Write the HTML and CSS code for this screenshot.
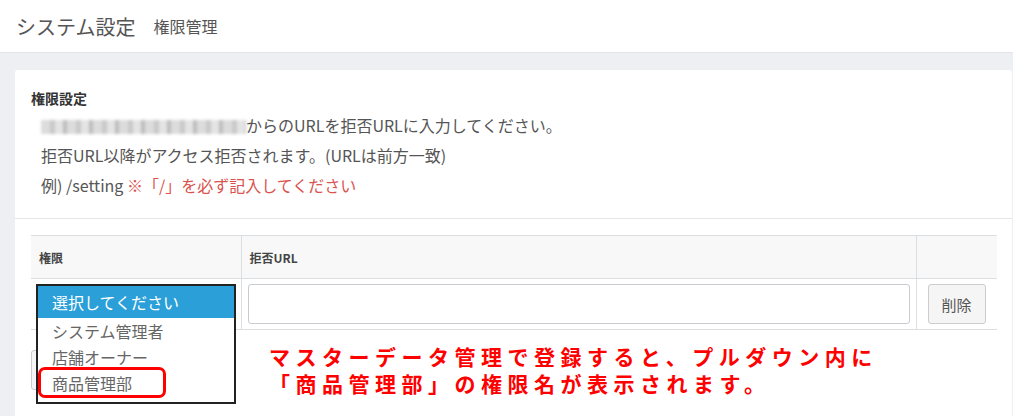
FILE: index.html
```html
<!DOCTYPE html>
<html lang="ja">
<head>
    <meta charset="UTF-8">
    <title>権限管理</title>
    <link rel="stylesheet" href="styles.css">
</head>
<body>
    <header class="page-header">
        <h1 class="page-title">システム設定</h1>
        <span class="page-sub">権限管理</span>
    </header>

    <main class="content">
        <section class="card">
            <div class="card-head">
                <h2 class="card-title">権限設定</h2>
                <p class="note"><span class="mosaic" aria-hidden="true"></span>からのURLを拒否URLに入力してください。</p>
                <p class="note">拒否URL以降がアクセス拒否されます。(URLは前方一致)</p>
                <p class="note">例) /setting <span class="warn">※「/」を必ず記入してください</span></p>
            </div>

            <div class="card-body">
                <table class="perm-table">
                    <thead>
                        <tr>
                            <th class="col-role">権限</th>
                            <th class="col-url">拒否URL</th>
                            <th class="col-act"></th>
                        </tr>
                    </thead>
                    <tbody>
                        <tr>
                            <td class="col-role">
                                <!-- opened pulldown -->
                                <ul class="dropdown">
                                    <li class="selected">選択してください</li>
                                    <li>システム管理者</li>
                                    <li>店舗オーナー</li>
                                    <li>商品管理部</li>
                                </ul>
                                <div class="mark"></div>
                            </td>
                            <td class="col-url"><input type="text" class="url-input"></td>
                            <td class="col-act"><button class="btn">削除</button></td>
                        </tr>
                    </tbody>
                </table>

                <!-- add button, hidden under the pulldown -->
                <div class="btn-add"></div>

                <p class="callout">マスターデータ管理で登録すると、プルダウン内に<br>「商品管理部」の権限名が表示されます。</p>
            </div>
        </section>
    </main>
</body>
</html>
```

FILE: styles.css
```css
/* base */
body, html {
    margin: 0;
    padding: 0;
    height: 100%;
    overflow: hidden;
    font-family: "Noto Sans CJK JP", "Noto Sans", sans-serif;
    color: #555;
    background: #edeff2;
}

/* top bar */
.page-header {
    height: 52px;
    display: flex;
    align-items: center;
    padding-left: 16px;
    background: #fff;
    border-bottom: 1px solid #e2e4e8;
}

.page-title {
    margin: 0;
    font-size: 20px;
    font-weight: 400;
    color: #555;
}

.page-sub {
    margin-left: 18px;
    font-size: 16px;
    color: #555;
}

.content {
    padding: 17px 1px 0 15px;
}

/* card */
.card {
    background: #fff;
    border-radius: 3px;
    min-height: 400px;
}

.card-head {
    padding: 18px 16px 18px 16px;
    border-bottom: 1px solid #e6e6e6;
}

.card-title {
    margin: 0 0 2px 0;
    font-size: 14px;
    font-weight: 700;
    color: #333;
    line-height: 20px;
}

.note {
    margin: 0;
    padding-left: 10px;
    font-size: 16px;
    line-height: 30px;
    color: #555;
}

.mosaic {
    display: inline-block;
    width: 205px;
    height: 14px;
    vertical-align: -2px;
    background: repeating-linear-gradient(90deg, #dcdcdc 0 9px, #c9c9c9 9px 14px, #e4e4e4 14px 22px, #bdbdbd 22px 26px);
    filter: blur(1.5px);
}

.warn {
    color: #d9534f;
}

.card-body {
    position: relative;
    padding: 16px 16px 30px 16px;
}

/* table */
.perm-table {
    width: 966px;
    border-collapse: collapse;
}

.perm-table th {
    height: 42px;
    padding: 0 8px;
    text-align: left;
    font-size: 12px;
    font-weight: 700;
    color: #444;
    background: #f8f8f8;
    border-top: 1px solid #dcdfe2;
    border-bottom: 1px solid #dcdfe2;
}

.perm-table td {
    height: 50px;
    padding: 0 6px;
    border-bottom: 1px solid #dcdfe2;
}

.col-role { width: 210px; box-sizing: border-box; }
.col-act { width: 81px; box-sizing: border-box; }

.perm-table .col-url,
.perm-table .col-act {
    border-left: 1px solid #dcdfe2;
}

.perm-table td.col-role {
    position: relative;
}

.perm-table td.col-act {
    padding: 0 10px 0 11px;
}

.url-input {
    display: block;
    width: 100%;
    height: 40px;
    box-sizing: border-box;
    border: 1px solid #c8ccd0;
    border-radius: 3px;
}

.btn {
    height: 40px;
    width: 58px;
    padding: 0;
    font-family: inherit;
    font-size: 15px;
    color: #555;
    background: #f5f5f5;
    border: 1px solid #ccc;
    border-radius: 3px;
}

.btn-add {
    margin-top: 20px;
    width: 150px;
    height: 38px;
    background: #f5f5f5;
    border: 1px solid #ccc;
    border-radius: 3px;
}

/* opened select list */
.dropdown {
    position: absolute;
    top: 5px;
    left: 5px;
    z-index: 5;
    width: 196px;
    margin: 0;
    padding: 0 0 6px 0;
    list-style: none;
    background: #fff;
    border: 2px solid #222;
}

.dropdown li {
    height: 26px;
    line-height: 26px;
    padding-left: 14px;
    font-size: 16px;
    color: #666;
}

.dropdown li.selected {
    height: 32px;
    line-height: 32px;
    color: #fff;
    background: #2a9fd8;
}

.mark {
    position: absolute;
    top: 88px;
    left: 7px;
    z-index: 6;
    width: 122px;
    height: 25px;
    border: 3px solid #f00;
    border-radius: 7px;
}

/* red annotation */
.callout {
    position: absolute;
    top: 124px;
    left: 254px;
    margin: 0;
    font-size: 21px;
    font-weight: 700;
    line-height: 27px;
    letter-spacing: 5.5px;
    color: #f00;
}
```
